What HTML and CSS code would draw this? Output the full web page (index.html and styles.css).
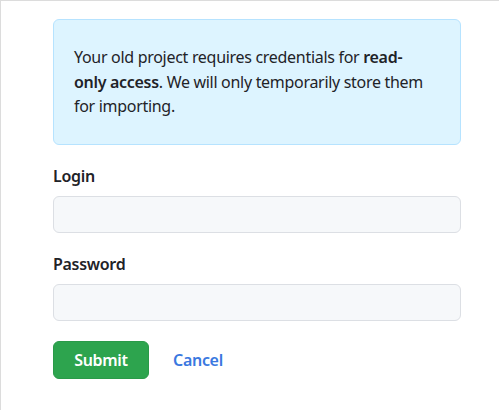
FILE: index.html
```html
<!DOCTYPE html>
<html lang="en">
<head>
<meta charset="utf-8">
<title>Import credentials</title>
<link rel="stylesheet" href="styles.css">
</head>
<body>
<div class="frame">
  <form class="form">
    <div class="flash">
      <p>Your old project requires credentials for <strong>read-<br>only access</strong>. We will only temporarily store them for importing.</p>
    </div>
    <div class="field">
      <label class="label" for="login">Login</label>
      <input class="input" id="login" type="text">
    </div>
    <div class="field">
      <label class="label" for="password">Password</label>
      <input class="input" id="password" type="password">
    </div>
    <div class="actions">
      <button class="btn-submit" type="submit">Submit</button>
      <a class="cancel" href="#">Cancel</a>
    </div>
  </form>
</div>
</body>
</html>
```
FILE: styles.css
```css
html, body {
  margin: 0;
  padding: 0;
  background: #ffffff;
}
body {
  font-family: "Noto Sans", "Open Sans", sans-serif;
  font-size: 16px;
  line-height: 24px;
  letter-spacing: -0.3px;
  color: #1f2328;
}
.frame {
  box-sizing: border-box;
  width: 499px;
  height: 410px;
  border-top: 1px solid #dcdcdc;
  border-left: 1px solid #dcdcdc;
  padding: 18px 0 0 52px;
}
.form {
  width: 408px;
  display: flex;
  flex-direction: column;
}
.flash {
  box-sizing: border-box;
  height: 126px;
  background: #ddf4ff;
  border: 1px solid #b6e3ff;
  border-radius: 6px;
  padding: 25px 20px;
  color: #1f2328;
  line-height: 24.5px;
}
.flash p {
  margin: 0;
}
.flash strong {
  font-weight: 600;
}
.field {
  display: flex;
  flex-direction: column;
  margin-top: 19px;
}
.label {
  font-weight: 600;
  margin-bottom: 8px;
}
.input {
  box-sizing: border-box;
  height: 37px;
  width: 100%;
  margin: 0;
  background: #f6f8fa;
  border: 1px solid #dcdfe4;
  border-radius: 6px;
  font: inherit;
}
.actions {
  display: flex;
  align-items: center;
  gap: 24px;
  margin-top: 20px;
}
.btn-submit {
  box-sizing: border-box;
  width: 96px;
  height: 38px;
  background: #2da44e;
  border: 1px solid #2a9a49;
  border-radius: 6px;
  color: #ffffff;
  font-family: inherit;
  font-size: 16px;
  font-weight: 600;
  letter-spacing: -0.3px;
  padding: 0;
}
.cancel {
  color: #3a78e0;
  font-weight: 600;
  text-decoration: none;
}
```
